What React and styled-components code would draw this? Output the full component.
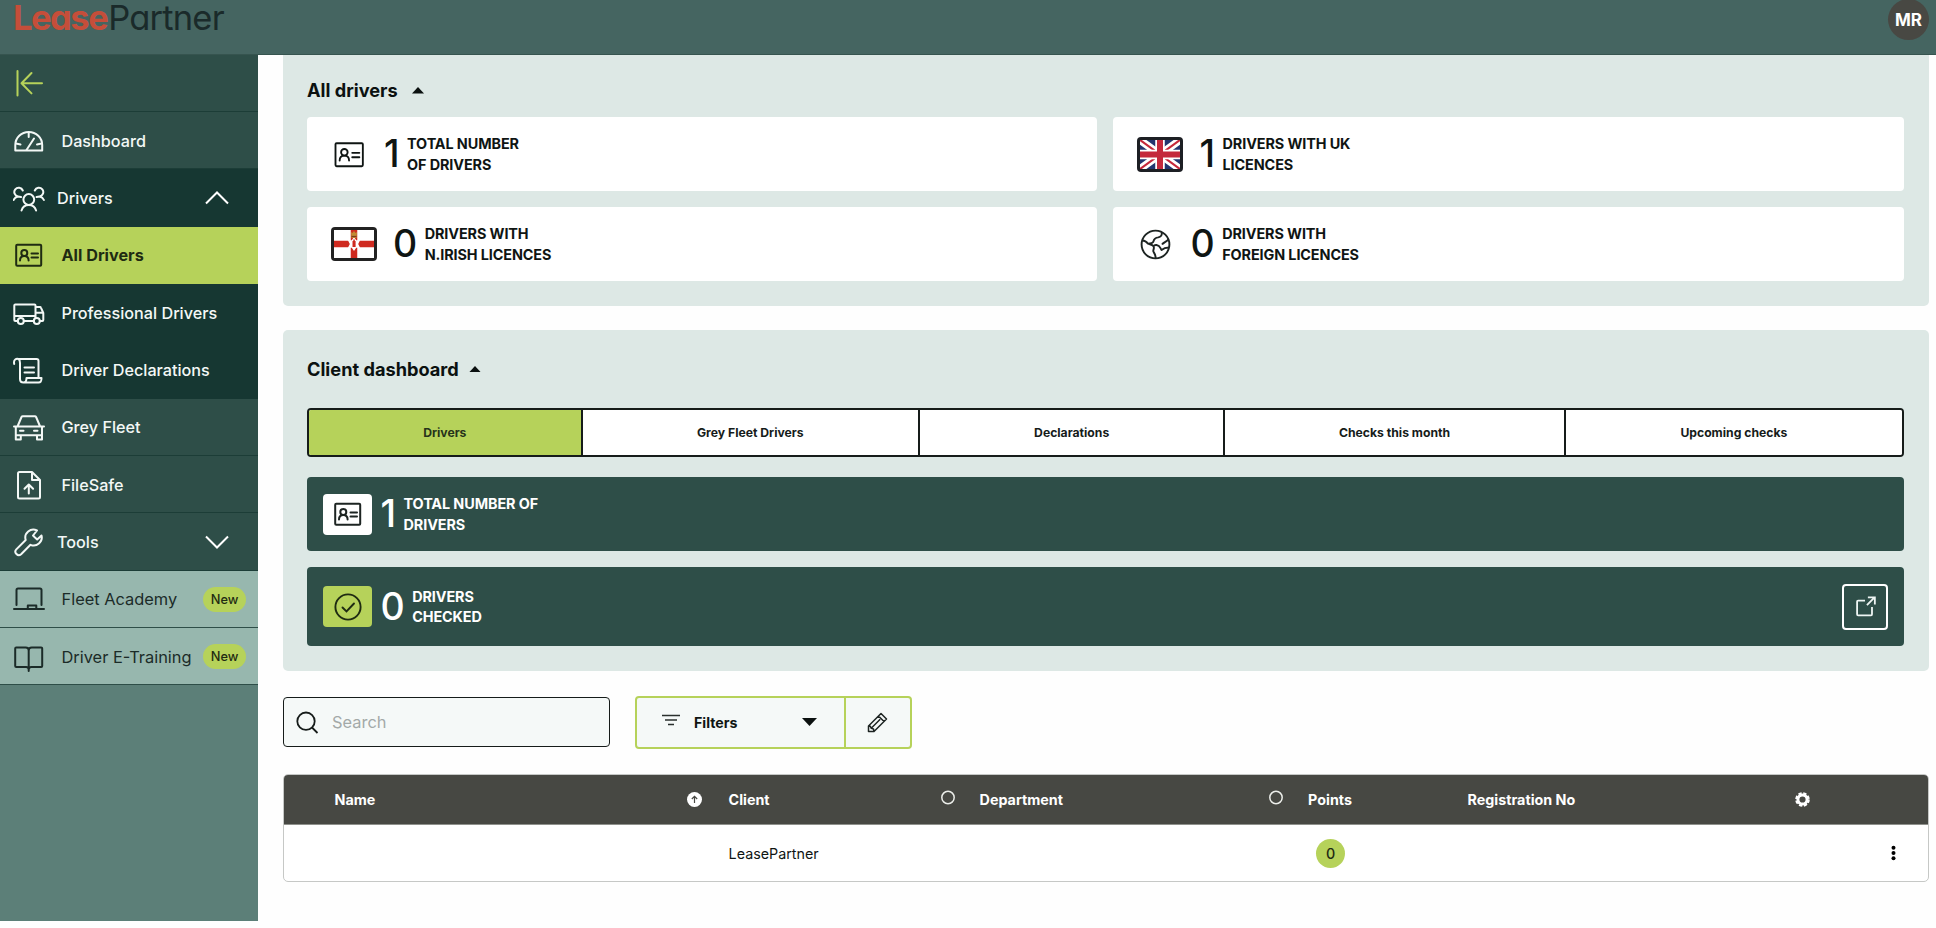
import React, { useState } from "react";
import styled, { createGlobalStyle } from "styled-components";

const GlobalStyle = createGlobalStyle`
	* {
		box-sizing: border-box;
	}
	body {
		margin: 0;
		background: #fefefe;
		color: #0f1513;
		font-family: Inter, "Liberation Sans", sans-serif;
	}
	button {
		font-family: inherit;
		color: inherit;
		cursor: pointer;
	}
`;

const Page = styled.div`
	height: 928px;
	display: flex;
	flex-direction: column;
	overflow: hidden;
`;

const Header = styled.header`
	height: 54.7px;
	flex: none;
	display: flex;
	justify-content: space-between;
	align-items: flex-start;
	padding: 0 7px 0 13px;
	background: #456561;
	border-bottom: 1px solid #36544f;
`;

const Logo = styled.div`
	display: flex;
	font-size: 34.5px;
	line-height: 35px;
	font-weight: 400;
	letter-spacing: -0.8px;
	font-feature-settings: "cv11";
	color: #1a2a2a;
`;

const LogoBold = styled.span`
	font-weight: 700;
	letter-spacing: -1.5px;
	margin-right: 1px;
	color: #c54e3a;
`;

const Avatar = styled.div`
	width: 41px;
	height: 41px;
	margin-top: -0.7px;
	border-radius: 50%;
	background: #484843;
	color: #fff;
	font-size: 17px;
	font-weight: 700;
	display: flex;
	align-items: center;
	justify-content: center;
`;

const Body = styled.div`
	flex: 1;
	min-height: 0;
	display: flex;
`;

const Sidebar = styled.nav`
	width: 258px;
	height: 866.3px;
	flex: none;
	background: #5c7f78;
`;

const tones = {
	base: { bg: "#2e4e48", fg: "#f3f8f6", line: "#1c3d37" },
	dark: { bg: "#163732", fg: "#f3f8f6", line: "#163732" },
	active: { bg: "#b6d25a", fg: "#1f2b12", line: "#b6d25a" },
	light: { bg: "#97b7ae", fg: "#1b2b28", line: "#2e4e48" },
};

const NavItem = styled.div`
	height: 57.33px;
	display: flex;
	align-items: center;
	padding: 1px 12px 0 13px;
	background: ${(p) => tones[p.$tone].bg};
	color: ${(p) => (p.$lime ? "#b6d25a" : tones[p.$tone].fg)};
	border-bottom: 1px solid ${(p) => tones[p.$tone].line};
`;

const NavText = styled.span`
	flex: 1;
	margin-left: ${(p) => (p.$group ? "12px" : "16.5px")};
	font-size: ${(p) => (p.$thin ? 16.4 : 16.2)}px;
	font-weight: ${(p) => (p.$bold ? 650 : p.$thin ? 400 : 500)};
	white-space: nowrap;
`;

const NewBadge = styled.span`
	width: 43px;
	height: 25px;
	border-radius: 13px;
	background: #b6d25a;
	color: #1f2b12;
	font-size: 12.8px;
	font-weight: 500;
	line-height: 25px;
	text-align: center;
`;

const Chevron = styled.svg`
	margin-right: 17px;
`;

const Main = styled.main`
	flex: 1;
	padding: 0 7px 0 24.6px;
`;

const Panel = styled.section`
	background: #dde8e5;
	border-radius: ${(p) => (p.$flush ? "0 0 5px 5px" : "5px")};
	padding: ${(p) => (p.$flush ? "23.8px 25px 24.8px 24.4px" : "26.700px 25px 24.500px 24.400px")};
	margin-bottom: 24.5px;
`;

const PanelTitle = styled.h2`
	display: flex;
	align-items: center;
	gap: ${(p) => p.$gap}px;
	margin: 0;
	height: 24px;
	font-size: 18.2px;
	font-weight: 650;
	color: #0b1110;
`;

const Cards = styled.div`
	display: grid;
	grid-template-columns: 1fr 1fr;
	gap: 16px;
	margin-top: 14.5px;
`;

const Card = styled.div`
	height: 74px;
	display: flex;
	align-items: center;
	gap: 16px;
	padding: 0.7px 24px 0;
	background: #fff;
	border-radius: 4px;
`;

const IconSlot = styled.div`
	width: ${(p) => (p.$wide ? 46 : 37)}px;
	display: flex;
	justify-content: center;
`;

const Stat = styled.div`
	display: flex;
	align-items: center;
	gap: 8px;
`;

const Count = styled.span`
	font-size: 37.5px;
	line-height: 44px;
	font-weight: 500;
	letter-spacing: -0.5px;
`;

const StatText = styled.span`
	padding-top: 0.5px;
	font-size: 14.4px;
	line-height: 20.6px;
	font-weight: 650;
	letter-spacing: -0.1px;
	text-transform: uppercase;
	white-space: pre-line;
`;

const Tabs = styled.div`
	display: flex;
	height: 49px;
	margin-top: 27px;
	border: 2px solid #161c1a;
	border-radius: 4px;
	overflow: hidden;
	background: #fff;
`;

const Tab = styled.button`
	flex: ${(p) => p.$grow} 1 0;
	padding: 0;
	border: 0;
	border-right: 2px solid #161c1a;
	background: ${(p) => (p.$active ? "#b6d25a" : "#fff")};
	color: ${(p) => (p.$active ? "#27331a" : "#161c1a")};
	font-size: 12.2px;
	font-weight: 650;
	&:last-child {
		border-right: 0;
	}
`;

const DarkCard = styled.div`
	height: ${(p) => p.$height}px;
	margin-top: ${(p) => p.$top}px;
	display: flex;
	align-items: center;
	gap: 8px;
	padding: 0 16px;
	background: #2e4e48;
	color: #fff;
	border-radius: 4px;
`;

const IconBox = styled.div`
	width: 49.5px;
	height: 41px;
	display: flex;
	align-items: center;
	justify-content: center;
	border-radius: 4px;
	background: ${(p) => (p.$lime ? "#b6d25a" : "#fff")};
	color: #1d2422;
`;

const OpenButton = styled.button`
	width: 46px;
	height: 46px;
	margin-left: auto;
	padding: 0;
	display: flex;
	align-items: center;
	justify-content: center;
	border: 2px solid #fff;
	border-radius: 4px;
	background: none;
	color: #eef5f3;
`;

const Toolbar = styled.div`
	display: flex;
	align-items: center;
	gap: 25px;
	padding-top: 0.5px;
	margin-bottom: 25px;
`;

const Search = styled.label`
	width: 327.4px;
	height: 50px;
	display: flex;
	align-items: center;
	gap: 13.5px;
	padding: 0 12px;
	border: 1px solid #161c1a;
	border-radius: 4px;
	background: #f5f9f8;
`;

const SearchInput = styled.input`
	flex: 1;
	min-width: 0;
	padding: 0;
	border: 0;
	outline: 0;
	background: none;
	font: 400 16.4px Inter, "Liberation Sans", sans-serif;
	&::placeholder {
		color: #a3a9a8;
	}
`;

const FilterGroup = styled.div`
	display: flex;
	width: 277px;
	height: 53px;
	border: 2px solid #b6d25a;
	border-radius: 4px;
	background: #f5f9f8;
`;

const FilterButton = styled.button`
	flex: 1;
	display: flex;
	align-items: center;
	padding: 0 27px 0 25px;
	border: 0;
	border-right: 2px solid #b6d25a;
	background: none;
	font-size: 14.2px;
	font-weight: 650;
`;

const FilterText = styled.span`
	flex: 1;
	margin-left: 14px;
	text-align: left;
`;

const EditButton = styled.button`
	width: 64px;
	padding: 0;
	display: flex;
	align-items: center;
	justify-content: center;
	border: 0;
	background: none;
`;

const Table = styled.div`
	border: 1px solid #c6c8c6;
	border-radius: 5px;
	overflow: hidden;
	background: #fff;
`;

const Row = styled.div`
	height: 56.5px;
	display: grid;
	grid-template-columns: 394px 251px 328.5px 159.5px 1fr;
	align-items: center;
	padding-left: 51px;
	font-size: 14.3px;
`;

const HeadRow = styled(Row)`
	height: 50px;
	background: #474843;
	color: #fff;
	font-weight: 650;
	border-bottom: 1px solid #8f918c;
`;

const Cell = styled.div`
	display: flex;
	align-items: center;
	justify-content: space-between;
	padding-right: ${(p) => p.$end || 0}px;
`;

const PointsBadge = styled.span`
	width: 29px;
	height: 29px;
	margin-left: 8px;
	border-radius: 50%;
	background: #b6d25a;
	color: #1f2b12;
	font-weight: 500;
	line-height: 29px;
	text-align: center;
`;

const icons = {
	collapse: <path d="M4.5 4v24.5M8.5 16.2H29M18.5 6l-10 10.200l10 10.200" />,
	gauge: (
		<>
			<path d="M2.300 25.500V20a13.200 12.800 0 0 1 26.900 0v5.500z" />
			<path d="M15.700 7.500v4.500M3 18.500l4.500 1M28.500 18.500l-4.500 1M13.500 25l7.500-11.500" />
		</>
	),
	people: (
		<>
			<circle cx="15.800" cy="17.500" r="5.400" />
			<path d="M8.500 28.500c1-3.500 3.500-5.500 7.300-5.500s6.300 2 7.300 5.500" />
			<path d="M9.800 8.500A4.400 4.400 0 1 0 5 14.500M5 14.500c-2 .5-3.500 1.500-4.300 3.500M5 14.500l3 .5" />
			<path d="M21.800 8.500A4.400 4.400 0 1 1 26.600 14.500M26.600 14.500c2 .5 3.500 1.500 4.300 3.500M26.600 14.500l-3 .5" />
		</>
	),
	idCard: (
		<>
			<rect x="3.200" y="5.700" width="25" height="21" rx="1" />
			<circle cx="11.300" cy="14" r="3" />
			<path d="M7 21.500c0-3 1.700-4.500 4.300-4.500s4.300 1.500 4.300 4.500M18.500 14.500H25M18.500 18.500H25" />
		</>
	),
	truck: (
		<>
			<path d="M4.500 24H2.300c-.7 0-1-.3-1-1V8.500c0-.7.300-1 1-1h19.200c.7 0 1 .3 1 1V21M22.500 10h4.500c.5 0 .8.300 1 .8l2.300 5.200v7c0 .7-.3 1-1 1h-2.500M10.800 24h10M1.300 19h20M22.500 15.700h7.500" />
			<circle cx="7.800" cy="24" r="3" />
			<circle cx="23.800" cy="24" r="3" />
		</>
	),
	scroll: (
		<>
			<path d="M1.200 10c-1-5 2.300-5.500 4.300-5h18c1.500 0 2 .8 2 2v16.500" />
			<path d="M5.500 5c1.500 1 1.500 2 1.500 4v16c0 3 2 3.500 3.500 3.500h15c3 0 3-2 3-4.500H13.500c0 2.500-.5 4.500-3 4.500" />
			<path d="M11.500 13.500h9.500M11.500 18.500h9.500" />
		</>
	),
	car: (
		<>
			<path d="M4.500 15.500L8.500 6c.3-.6.6-.8 1.200-.8h12.200c.6 0 .9.200 1.200.8l4 9.500M1 15.500h30" />
			<path d="M2.800 16v12.500h5v-4.300M29 16v12.500h-5v-4.300M2.800 24.200h26M7 19.800h3.500M21 19.800h3.500" />
		</>
	),
	file: (
		<>
			<path d="M19 3H6.500c-1 0-1.500.5-1.500 1.500v23.500c0 1 .5 1.500 1.500 1.500h19c1 0 1.500-.5 1.500-1.500V11zM19 3v8h8" />
			<path d="M15.800 24.500v-8.500M11.500 19.800l4.300-4.300 4.300 4.300" />
		</>
	),
	wrench: (
		<path d="M22 11.500l-2-2 4-5a8 8 0 0 0-11.300 9.500L3.300 23.400a3.400 3.400 0 0 0 4.800 4.800l9.400-9.400A8 8 0 0 0 28.500 9.500l-4.300 4z" />
	),
	laptop: (
		<path d="M3.500 22V7c0-1 .5-1.500 1.500-1.500h22c1 0 1.500.5 1.500 1.500V22M1 26h30M14.800 25.500v-3h8.500v3" />
	),
	book: (
		<path d="M15.700 27.500V9.500c0-2-1-3-3-3H3.200c-.7 0-1 .3-1 1v17.400c0 .7.300 1 1 1h10c1.500 0 2.500.5 2.500 2.500 0-2 1-2.500 2.500-2.500h10c.7 0 1-.3 1-1V7.500c0-.7-.3-1-1-1h-9.500c-2 0-3 1-3 3M15.700 28v2" />
	),
};

const Icon = ({ name, size = 32, stroke = 2 }) => (
	<svg
		width={size}
		height={size}
		viewBox="0 0 32 32"
		fill="none"
		stroke="currentColor"
		strokeWidth={stroke}
		strokeLinejoin="round"
		strokeLinecap="round"
	>
		{icons[name]}
	</svg>
);

const Caret = ({ down, width = 12, height = 6.5 }) => (
	<svg width={width} height={height} viewBox="0 0 12 7" preserveAspectRatio="none">
		<path d={down ? "M0 0h12L6 7z" : "M0 7h12L6 0z"} fill="#0b1110" />
	</svg>
);

const UkFlag = () => (
	<svg width="46" height="35" viewBox="0 0 46 35">
		<rect width="46" height="35" rx="4" fill="#1d1f24" />
		<svg x="3" y="3" width="40" height="29" viewBox="0 0 40 29">
			<rect width="40" height="29" fill="#22356f" />
			<path d="M0 0l40 29M40 0L0 29" stroke="#fff" strokeWidth="7.500" />
			<path d="M0 0l40 29M40 0L0 29" stroke="#c4283c" strokeWidth="2.200" />
			<path d="M20 0v29M0 14.500h40" stroke="#fff" strokeWidth="9.500" />
			<path d="M20 0v29M0 14.500h40" stroke="#c4283c" strokeWidth="6" />
		</svg>
	</svg>
);

const UlsterFlag = () => (
	<svg width="46" height="34" viewBox="0 0 46 34">
		<rect width="46" height="34" rx="4" fill="#222" />
		<rect x="3" y="3" width="40" height="28" fill="#fff" />
		<path d="M23 3v28M3 17h40" stroke="#cf2a20" strokeWidth="6.500" />
		<path d="M23 10l2.200 3.200 4-.2-2 4 2 4-4-.2L23 24l-2.200-3.200-4 .2 2-4-2-4 4 .2z" fill="#fff" />
		<path d="M21.500 20v-6h.8v-1.500h1.500V14h.8v6z" fill="#cf2a20" />
		<path d="M20 5l1.500 1L23 4l1.500 2L26 5l-.5 6h-5z" fill="#c08a35" />
		<path d="M20.500 9.500h5" stroke="#7c3a1c" strokeWidth="1.200" />
	</svg>
);

const Globe = () => (
	<svg width="31" height="31" viewBox="0 0 31 31" fill="none" stroke="#1d2422" strokeWidth="1.900" strokeLinejoin="round">
		<circle cx="15.500" cy="15.500" r="13.900" />
		<path d="M21.500 3.200c1 3-.8 4.800-3.300 5.200-3.200.4-4.200 1.600-4.700 3.800-.5 2-3 2.300-5.500 2.500M2.500 11.500c2.500 0 4 1.200 5.500 3.200 1.800.8 4.200.6 5.500 2.600 1.200 2-.5 3.300-.2 5 .5 1.800 2.300 2.500 2.400 7M29 18.500c-3.500 0-5.200.5-7.500 2.500-1.500-2.500-1.500-4.500-5-5-1.500-.2-2.500.3-3 1.300M22 15.500c1.500-2 4-2.500 6.500-5" />
	</svg>
);

const CheckCircle = () => (
	<svg width="28" height="28" viewBox="0 0 28 28" fill="none" stroke="#1f2b12" strokeWidth="1.900" strokeLinecap="round">
		<circle cx="14" cy="14" r="12.600" />
		<path d="M8.500 14.500l4 4 7.500-8" />
	</svg>
);

const OpenIcon = () => (
	<svg width="21" height="21" viewBox="0 0 22 22" fill="none" stroke="currentColor" strokeWidth="1.900">
		<path d="M10.500 4.800H3.200c-.7 0-1 .3-1 1v13.400c0 .7.300 1 1 1h13.600c.7 0 1-.3 1-1V11.500M12.500 9.500l8-8M13.500 1.500h7.300V9" />
	</svg>
);

const SearchIcon = () => (
	<svg width="23" height="23" viewBox="0 0 23 23" fill="none" stroke="#161c1a" strokeWidth="1.800">
		<circle cx="10" cy="10.200" r="8.700" />
		<path d="M16 16.500l5.500 5.500" />
	</svg>
);

const FilterIcon = () => (
	<svg width="18" height="16" viewBox="0 0 18 16" stroke="#2a302e" strokeWidth="1.600">
		<path d="M0 1.500h18M3 6h12M6 10.500h6" />
	</svg>
);

const PencilIcon = () => (
	<svg width="21" height="21" viewBox="0 0 21 21" fill="none" stroke="#1d2422" strokeWidth="1.500" strokeLinejoin="round">
		<path d="M1.500 19.500v-5.500L14 1.500l5.500 5.500L7 19.500zM11.500 4l5.500 5.500M13.200 7.200l-9 9M1.500 14l1.800.3 1 2 2.200.7.5 2.500" />
	</svg>
);

const SortUp = () => (
	<svg width="15" height="15" viewBox="0 0 15 15">
		<circle cx="7.500" cy="7.500" r="7.500" fill="#fff" />
		<path d="M7.500 11V4.500M4.800 7l2.700-2.700L10.200 7" fill="none" stroke="#474843" strokeWidth="1.200" />
	</svg>
);

const RingMark = styled.svg`
	margin-bottom: 4px;
`;

const SortRing = () => (
	<RingMark width="14" height="15" viewBox="0 0 14 15" fill="none" stroke="#eceeea" strokeWidth="1.500">
		<circle cx="7" cy="7.500" r="6.200" />
	</RingMark>
);

const Gear = () => (
	<svg width="15" height="15" viewBox="0 0 15 15" fill="none" stroke="#fff">
		<circle cx="7.500" cy="7.500" r="4.600" strokeWidth="3" />
		<circle cx="7.500" cy="7.500" r="6.300" strokeWidth="2" strokeDasharray="3.300 1.650" />
	</svg>
);

const Dots = () => (
	<svg width="5" height="16" viewBox="0 0 5 16">
		<circle cx="2.500" cy="2.800" r="2" />
		<circle cx="2.500" cy="8" r="2" />
		<circle cx="2.500" cy="13.200" r="2" />
	</svg>
);

const navItems = [
	{ label: "Dashboard", icon: "gauge", tone: "base" },
	{ label: "Drivers", icon: "people", tone: "dark", group: "open" },
	{ label: "All Drivers", icon: "idCard", tone: "active" },
	{ label: "Professional Drivers", icon: "truck", tone: "dark" },
	{ label: "Driver Declarations", icon: "scroll", tone: "dark" },
	{ label: "Grey Fleet", icon: "car", tone: "base" },
	{ label: "FileSafe", icon: "file", tone: "base" },
	{ label: "Tools", icon: "wrench", tone: "base", group: "closed" },
	{ label: "Fleet Academy", icon: "laptop", tone: "light", isNew: true },
	{ label: "Driver E-Training", icon: "book", tone: "light", isNew: true },
];

const driverStats = [
	{ count: 1, text: "Total number\nof drivers", icon: <Icon name="idCard" size={35} stroke={1.7} /> },
	{ count: 1, text: "Drivers with UK\nlicences", icon: <UkFlag />, wide: true },
	{ count: 0, text: "Drivers with\nN.Irish licences", icon: <UlsterFlag />, wide: true },
	{ count: 0, text: "Drivers with\nforeign licences", icon: <Globe /> },
];

const tabs = [
	{ label: "Drivers", grow: 273 },
	{ label: "Grey Fleet Drivers", grow: 337 },
	{ label: "Declarations", grow: 305 },
	{ label: "Checks this month", grow: 340 },
	{ label: "Upcoming checks", grow: 338 },
];

const SideNav = () => (
	<Sidebar>
		<NavItem $tone="base" $lime>
			<Icon name="collapse" />
		</NavItem>
		{navItems.map((item) => (
			<NavItem key={item.label} $tone={item.tone}>
				<Icon name={item.icon} />
				<NavText
					$group={item.group}
					$bold={item.tone === "active"}
					$thin={item.isNew}
				>
					{item.label}
				</NavText>
				{item.isNew && <NewBadge>New</NewBadge>}
				{item.group && (
					<Chevron width="24" height="14" viewBox="0 0 24 14" fill="none" stroke="#fff" strokeWidth="2">
						<path d={item.group === "open" ? "M1 12.500L12 1.500l11 11" : "M1 1.500l11 11L23 1.500"} />
					</Chevron>
				)}
			</NavItem>
		))}
	</Sidebar>
);

const DriversTable = () => (
	<Table>
		<HeadRow>
			<Cell $end={26.5}>
				Name
				<SortUp />
			</Cell>
			<Cell $end={25}>
				Client
				<SortRing />
			</Cell>
			<Cell $end={25}>
				Department
				<SortRing />
			</Cell>
			<Cell>Points</Cell>
			<Cell $end={118}>
				Registration No
				<Gear />
			</Cell>
		</HeadRow>
		<Row>
			<Cell />
			<Cell>LeasePartner</Cell>
			<Cell />
			<Cell>
				<PointsBadge>0</PointsBadge>
			</Cell>
			<Cell $end={32}>
				<span />
				<Dots />
			</Cell>
		</Row>
	</Table>
);

const App = () => {
	const [activeTab, setActiveTab] = useState("Drivers");
	const [search, setSearch] = useState("");

	return (
		<Page>
			<GlobalStyle />
			<Header>
				<Logo>
					<LogoBold>Lease</LogoBold>Partner
				</Logo>
				<Avatar>MR</Avatar>
			</Header>
			<Body>
				<SideNav />
				<Main>
					<Panel $flush>
						<PanelTitle $gap={14}>
							All drivers
							<Caret />
						</PanelTitle>
						<Cards>
							{driverStats.map((stat) => (
								<Card key={stat.text}>
									<IconSlot $wide={stat.wide}>{stat.icon}</IconSlot>
									<Stat>
										<Count>{stat.count}</Count>
										<StatText>{stat.text}</StatText>
									</Stat>
								</Card>
							))}
						</Cards>
					</Panel>
					<Panel>
						<PanelTitle $gap={10.5}>
							Client dashboard
							<Caret />
						</PanelTitle>
						<Tabs>
							{tabs.map((tab) => (
								<Tab
									key={tab.label}
									$grow={tab.grow}
									$active={tab.label === activeTab}
									onClick={() => setActiveTab(tab.label)}
								>
									{tab.label}
								</Tab>
							))}
						</Tabs>
						<DarkCard $height={74} $top={20.5}>
							<IconBox>
								<Icon name="idCard" />
							</IconBox>
							<Stat>
								<Count>1</Count>
								<StatText>{"Total number of\ndrivers"}</StatText>
							</Stat>
						</DarkCard>
						<DarkCard $height={79} $top={16}>
							<IconBox $lime>
								<CheckCircle />
							</IconBox>
							<Stat>
								<Count>0</Count>
								<StatText>{"Drivers\nchecked"}</StatText>
							</Stat>
							<OpenButton>
								<OpenIcon />
							</OpenButton>
						</DarkCard>
					</Panel>
					<Toolbar>
						<Search>
							<SearchIcon />
							<SearchInput
								placeholder="Search"
								value={search}
								onChange={(e) => setSearch(e.target.value)}
							/>
						</Search>
						<FilterGroup>
							<FilterButton>
								<FilterIcon />
								<FilterText>Filters</FilterText>
								<Caret down width={15} height={8} />
							</FilterButton>
							<EditButton>
								<PencilIcon />
							</EditButton>
						</FilterGroup>
					</Toolbar>
					<DriversTable />
				</Main>
			</Body>
		</Page>
	);
};

export default App;
